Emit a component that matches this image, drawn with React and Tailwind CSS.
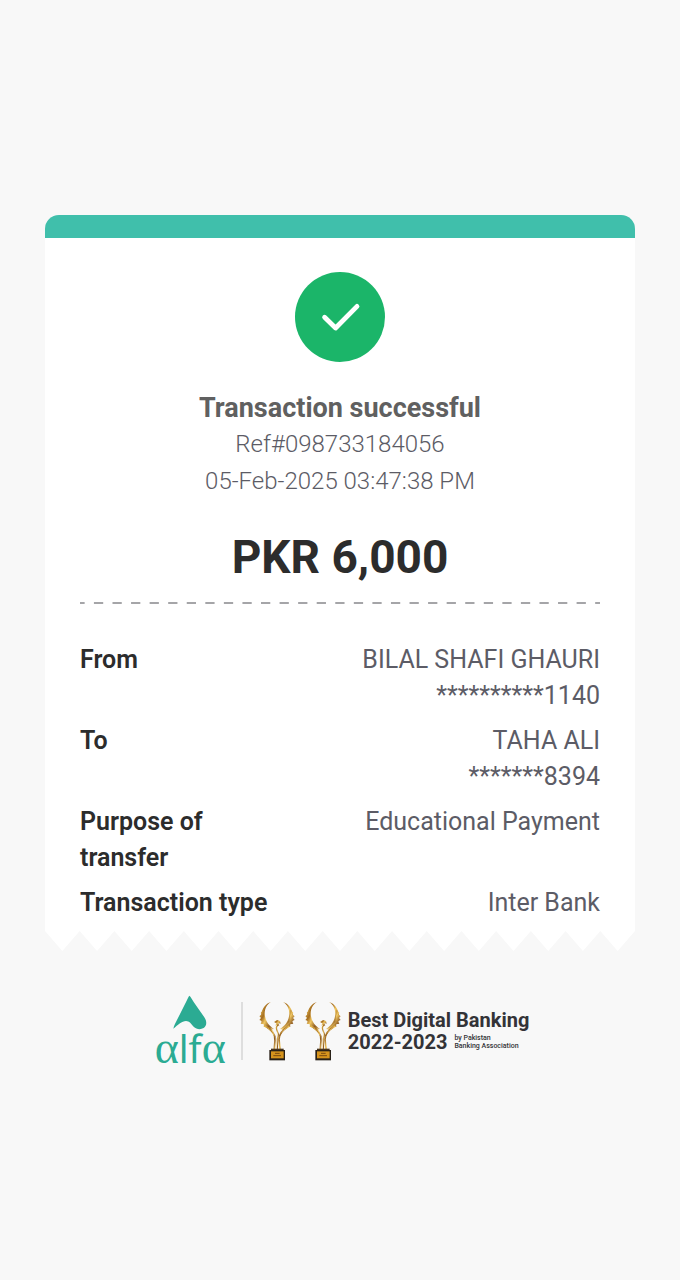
const details = [
  { label: 'From', lines: ['BILAL SHAFI GHAURI', '**********1140'] },
  { label: 'To', lines: ['TAHA ALI', '*******8394'] },
  { label: 'Purpose of transfer', lines: ['Educational Payment'] },
  { label: 'Transaction type', lines: ['Inter Bank'] },
]

const TEETH = 17

function TornEdge() {
  let d = 'M0 0'
  for (let i = 0; i < TEETH; i++) {
    d += ` L${i * 10 + 5} 20 L${i * 10 + 10} 0`
  }
  return (
    <svg className="block h-5 w-full text-white" viewBox={`0 0 ${TEETH * 10} 20`} preserveAspectRatio="none" aria-hidden="true">
      <path d={`${d} Z`} fill="currentColor" />
    </svg>
  )
}

function DashedRule() {
  return (
    <svg className="block h-0.5 w-full" viewBox="0 0 521 2" preserveAspectRatio="none" aria-hidden="true">
      <path d="M0 1H521" stroke="#88888c" strokeWidth="1.4" strokeDasharray="9.3 9.3" strokeDashoffset="4.65" />
    </svg>
  )
}

function SuccessIcon() {
  return (
    <svg className="size-[90px]" viewBox="0 0 90 90" fill="none" role="img" aria-label="Success">
      <circle cx="45" cy="45" r="45" fill="#1bb569" />
      <path d="M29.6 45.2 40.6 56 62 34.4" stroke="#fff" strokeWidth="4.8" strokeLinecap="round" strokeLinejoin="round" />
    </svg>
  )
}

function AlfaLogo() {
  return (
    <div className="flex flex-col items-center text-[#2bab93]" role="img" aria-label="alfa">
      <svg className="h-[35px] w-[34px]" viewBox="0 0 102 105" aria-hidden="true">
        <path
          d="M49 2 C53 5 58 14 62 21 L94 67 C102 79 102 92 92 99 C82 105 70 103 62 95 C55 87 49 78 39 78 C27 78 13 91 1 101 C3 91 8 83 13 73 L41 17 C44 11 46 5 49 2Z"
          fill="currentColor"
        />
      </svg>
      <div className="flex h-9 items-baseline leading-9">
        <span className="font-['Liberation_Serif',serif] text-[46px] leading-9">α</span>
        <span className="font-['Noto_Sans',sans-serif] text-[38px] leading-9">lf</span>
        <span className="font-['Liberation_Serif',serif] text-[46px] leading-9">α</span>
      </div>
    </div>
  )
}

function Trophy() {
  return (
    <svg className="h-[60px] w-9" viewBox="0 0 108 180" fill="none" aria-hidden="true">
      <defs>
        <linearGradient id="gold" x1="0" y1="0" x2="1" y2="1">
          <stop offset="0" stopColor="#e4b94c" />
          <stop offset="0.3" stopColor="#a56d20" />
          <stop offset="0.5" stopColor="#f0c762" />
          <stop offset="0.75" stopColor="#8e5b21" />
          <stop offset="1" stopColor="#e3b75c" />
        </linearGradient>
      </defs>
      <g fill="url(#gold)">
        <path d="M36 3 C20 13 15 29 18 46 C21 63 31 75 46 85 C32 82 20 77 12 68 C5 60 4 51 6 43 C9 23 19 8 36 3Z" />
        <path d="M72 3 C88 13 93 29 90 46 C87 63 77 75 62 85 C76 82 88 77 96 68 C103 60 104 51 102 43 C99 23 89 8 72 3Z" />
        <path d="M13 26 L5 36 L9 39 L1 46 L7 50 L1 57 L9 60 L5 68 L15 70 L14 77 L25 79 L26 84 L42 88 L17 62Z" />
        <path d="M95 26 L103 36 L99 39 L107 46 L101 50 L107 57 L99 60 L103 68 L93 70 L94 77 L83 79 L82 84 L66 88 L91 62Z" />
        <path d="M45 63 L54 57 L63 60 L65 68 L58 66 L61 76 L54 71 L49 74 L52 67Z" />
      </g>
      <g stroke="url(#gold)" strokeLinecap="round">
        <path d="M18 76 C38 84 49 98 48 119 L46 143" strokeWidth="5" />
        <path d="M90 76 C75 84 61 95 60 115 L63 143" strokeWidth="5" />
        <path d="M56 73 C43 84 63 91 57 106 C52 119 56 130 55 143" strokeWidth="4" />
        <path d="M28 83 C38 93 40 92 46 104 M79 84 C68 91 66 98 61 106" strokeWidth="3" />
      </g>
      <path d="M36 143 H74 V149 H36Z" fill="#49351e" />
      <path d="M31 147 H78 V178 H31Z" fill="#292118" />
      <path d="M36 151 H74 V172 H36Z" fill="#d6941d" />
      <path d="M48 157 H62 M43 164 H66" stroke="#7b4b10" strokeWidth="3" />
    </svg>
  )
}

export default function App() {
  return (
    <main className="min-h-screen bg-[#f8f8f8] px-[45px] pt-[215px] pb-16 font-[Roboto,'Noto_Sans',sans-serif]">
      <article>
        <div className="h-[23px] rounded-t-[14px] bg-[#40bfab]" />
        <div className="bg-white px-[35px] pt-[34px] pb-[10px]">
          <header className="flex flex-col items-center text-center text-[#5c5c66]">
            <SuccessIcon />
            <h1 className="mt-7 text-[27px] leading-9 font-bold text-[#606060]">Transaction successful</h1>
            <p className="text-2xl leading-[37px] font-light">Ref#098733184056</p>
            <p className="text-2xl leading-[37px] font-light">05-Feb-2025 03:47:38 PM</p>
            <p className="mt-8 mb-5 text-[46px] leading-[50px] font-bold text-[#2c2c2c]">PKR 6,000</p>
          </header>
          <DashedRule />
          <dl className="mt-[38px] flex flex-col gap-[9px] text-[25px] leading-9">
            {details.map(({ label, lines }) => (
              <div key={label} className="flex justify-between gap-4">
                <dt className="max-w-48 font-semibold text-[#2c2c2c]">{label}</dt>
                <dd className="text-right text-[#5c5c66]">
                  {lines.map((line) => (
                    <div key={line}>{line}</div>
                  ))}
                </dd>
              </div>
            ))}
          </dl>
        </div>
        <TornEdge />
      </article>

      <footer className="mt-11 flex items-center justify-center pl-1">
        <AlfaLogo />
        <div className="ml-[15px] h-[58px] w-0.5 bg-[#dedede]" />
        <div className="ml-4 flex gap-[10px]">
          <Trophy />
          <Trophy />
        </div>
        <div className="ml-[7px] text-[20px] leading-[22px] font-bold text-[#333337]">
          <p>Best Digital Banking</p>
          <div className="flex items-center gap-[7px]">
            <span>2022-2023</span>
            <span className="text-[7px] leading-2 font-medium">
              by Pakistan
              <br />
              Banking Association
            </span>
          </div>
        </div>
      </footer>
    </main>
  )
}
